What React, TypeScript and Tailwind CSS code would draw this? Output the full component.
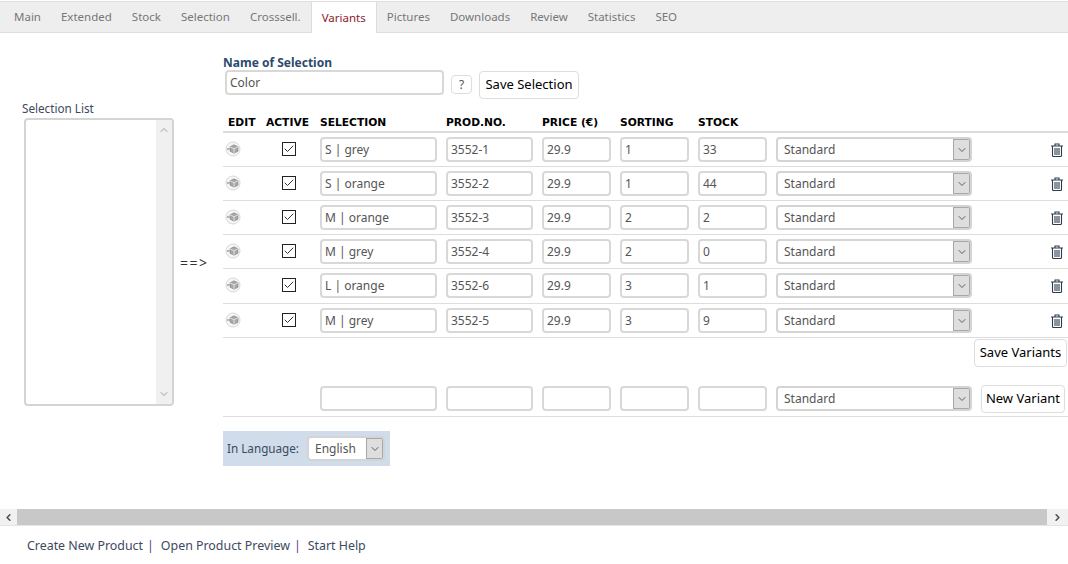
import React from 'react';
import { ChevronDown, ChevronUp, Check, ChevronLeft, ChevronRight } from 'lucide-react';

const tabs = ['Main', 'Extended', 'Stock', 'Selection', 'Crosssell.', 'Variants', 'Pictures', 'Downloads', 'Review', 'Statistics', 'SEO'];

const variants = [
  { selection: 'S | grey', prod: '3552-1', sorting: '1', stock: '33' },
  { selection: 'S | orange', prod: '3552-2', sorting: '1', stock: '44' },
  { selection: 'M | orange', prod: '3552-3', sorting: '2', stock: '2' },
  { selection: 'M | grey', prod: '3552-4', sorting: '2', stock: '0' },
  { selection: 'L | orange', prod: '3552-6', sorting: '3', stock: '1' },
  { selection: 'M | grey', prod: '3552-5', sorting: '3', stock: '9' },
];

const gridCols = 'grid grid-cols-[43px_54px_126px_96px_78px_78px_78px_196px_96px]';

const Field = ({ value = '', width }: { value?: string; width: string }) => (
  <input
    readOnly
    defaultValue={value}
    className={`${width} h-[25px] rounded-[4px] border-2 border-[#d8d8d8] bg-white px-[3px] text-[12px] text-[#555] outline-none`}
  />
);

const Dropdown = ({ label, width }: { label: string; width: string }) => (
  <div className={`${width} flex h-[25px] items-stretch overflow-hidden rounded-[4px] border-2 border-[#d4d4d4] bg-white`}>
    <span className="flex-1 pl-[6px] text-[12px] leading-[22px] text-[#555]">{label}</span>
    <span className="flex w-[17px] items-center justify-center border border-[#a8a8a8] bg-[#dedede]">
      <ChevronDown size={12} strokeWidth={1.5} className="text-[#333]" />
    </span>
  </div>
);

const PlainButton = ({ children, className }: { children: React.ReactNode; className: string }) => (
  <button className={`h-[28px] rounded-[4px] border border-[#ddd] bg-white text-[13px] whitespace-nowrap text-black ${className}`}>
    {children}
  </button>
);

const EditIcon = () => (
  <svg width="16" height="16" viewBox="0 0 16 16" className="mt-[4px] ml-[2px]">
    <circle cx="8" cy="8" r="7" fill="#f6f6f6" stroke="#d8d8d8" />
    <path d="M2 8h2.5" stroke="#777" strokeWidth="1" />
    <path d="M5 5.8 9 3.8 13 5.8v4.4L9 12.2 5 10.2z" fill="#a8a8a8" stroke="#808080" strokeWidth="0.6" />
    <path d="M5 5.8 9 7.8 13 5.8M9 7.8v4.4" fill="none" stroke="#eee" strokeWidth="0.8" />
  </svg>
);

const TrashIcon = () => (
  <svg width="12" height="14" viewBox="0 0 12 14" fill="none" stroke="#2d3b4d" strokeWidth="1.1">
    <path d="M0 3h12M4 3V1h4v2" />
    <path d="M1.5 3v9.5a1 1 0 0 0 1 1h7a1 1 0 0 0 1-1V3" />
    <path d="M4 5v7M6 5v7M8 5v7" />
  </svg>
);

const CheckMark = () => (
  <span className="mb-[2px] flex h-[14px] w-[14px] items-center justify-center border border-[#222] bg-white">
    <Check size={12} strokeWidth={2} className="text-[#333]" />
  </span>
);

export default function App() {
  return (
    <div className="h-[564px] w-[1068px] overflow-hidden bg-white font-['Noto_Sans',sans-serif] text-[12px] text-[#555]">
      {/* Tabs */}
      <div className="mt-px flex h-[32px] border-y border-[#ddd] bg-[#eee] pl-[4px] text-[11.5px] text-[#777]">
        {tabs.map((tab) =>
          tab === 'Variants' ? (
            <span key={tab} className="-mb-px flex items-center border-x border-[#ddd] bg-white px-[10px] text-[#8b1a2b]">
              {tab}
            </span>
          ) : (
            <span key={tab} className="flex items-center px-[10px]">
              {tab}
            </span>
          ),
        )}
      </div>

      <div className="flex h-[476px]">
        {/* Selection list */}
        <div className="w-[180px] pt-[68px] pl-[22px]">
          <div className="mb-[3px] text-[11.7px] leading-[14px] text-[#3c4a60]">Selection List</div>
          <div className="ml-[2px] flex h-[288px] w-[150px] justify-end overflow-hidden rounded-[4px] border-2 border-[#d4d4d4] bg-white">
            <div className="flex w-[16px] flex-col items-center justify-between bg-[#f0f0f0] py-[4px] text-[#c4c4c4]">
              <ChevronUp size={12} strokeWidth={2.5} />
              <ChevronDown size={12} strokeWidth={2.5} />
            </div>
          </div>
        </div>

        <div className="w-[43px] pt-[223px] text-[14px] leading-[14px] tracking-[1.5px] text-[#333]">==&gt;</div>

        {/* Variant table */}
        <div className="w-[845px] pt-[22px]">
          <div className="text-[12px] leading-[15px] font-bold text-[#2c4a6e]">Name of Selection</div>
          <div className="flex items-start">
            <Field value="Color" width="ml-[2px] w-[219px]" />
            <button className="mt-[5px] ml-[7px] h-[19px] w-[21px] rounded-[4px] border border-[#ddd] bg-white text-[12px] leading-none text-[#555]">?</button>
            <PlainButton className="mt-px ml-[7px] w-[100px]">Save Selection</PlainButton>
          </div>

          <div className={`${gridCols} mt-[15px] h-[19px] border-b-[2px] border-[#ddd] pt-[2px] font-['DejaVu_Sans',sans-serif] text-[10.7px] leading-[14px] font-bold text-black`}>
            <span className="pl-[5px]">EDIT</span>
            <span>ACTIVE</span>
            <span>SELECTION</span>
            <span>PROD.NO.</span>
            <span>PRICE (€)</span>
            <span>SORTING</span>
            <span>STOCK</span>
          </div>

          {variants.map((v, i) => (
            <div key={v.prod} className={`${gridCols} border-b border-[#ddd] pt-[4px] ${i === 4 ? 'h-[35px]' : 'h-[34px]'}`}>
              <EditIcon />
              <span className="flex h-[25px] items-center pl-[16px]"><CheckMark /></span>
              <Field value={v.selection} width="w-[117px]" />
              <Field value={v.prod} width="w-[87px]" />
              <Field value="29.9" width="w-[69px]" />
              <Field value={v.sorting} width="w-[69px]" />
              <Field value={v.stock} width="w-[69px]" />
              <Dropdown label="Standard" width="w-[196px]" />
              <span className="flex h-[25px] items-center justify-end pr-[5px]">
                <TrashIcon />
              </span>
            </div>
          ))}

          <div className="mt-px flex justify-end pr-px">
            <PlainButton className="w-[93px]">Save Variants</PlainButton>
          </div>

          <div className={`${gridCols} h-[50px] border-b border-[#ddd] pt-[19px]`}>
            <span />
            <span />
            <Field width="w-[117px]" />
            <Field width="w-[87px]" />
            <Field width="w-[69px]" />
            <Field width="w-[69px]" />
            <Field width="w-[69px]" />
            <Dropdown label="Standard" width="w-[196px]" />
            <div className="-mt-px flex justify-end pr-[3px]">
              <PlainButton className="w-[84px]">New Variant</PlainButton>
            </div>
          </div>

          <div className="mt-[14px] flex h-[35px] w-[167px] items-center bg-[#d0dce9] pl-[4px] text-[11.7px] text-[#3c4a60]">
            <span className="w-[80px]">In Language:</span>
            <Dropdown label="English" width="w-[78px]" />
          </div>
        </div>
      </div>

      {/* Page scrollbar */}
      <div className="flex h-[17px] items-stretch border-b border-[#e4e4e4] bg-[#f1f1f1]">
        <span className="flex w-[17px] items-center justify-center text-[#505050]"><ChevronLeft size={11} strokeWidth={3.5} /></span>
        <span className="flex-1 bg-[#c8c8c8]" />
        <span className="flex w-[21px] items-center justify-center text-[#505050]"><ChevronRight size={11} strokeWidth={3.5} /></span>
      </div>

      <div className="mt-[12px] flex pl-[27px] text-[12.4px] leading-[16px] text-[#3c4a60]">
        <span>Create New Product</span>
        <span className="mr-[7px] ml-[4px] text-[#5b3a86]">|</span>
        <span>Open Product Preview</span>
        <span className="mr-[7px] ml-[4px] text-[#5b3a86]">|</span>
        <span>Start Help</span>
      </div>
    </div>
  );
}
